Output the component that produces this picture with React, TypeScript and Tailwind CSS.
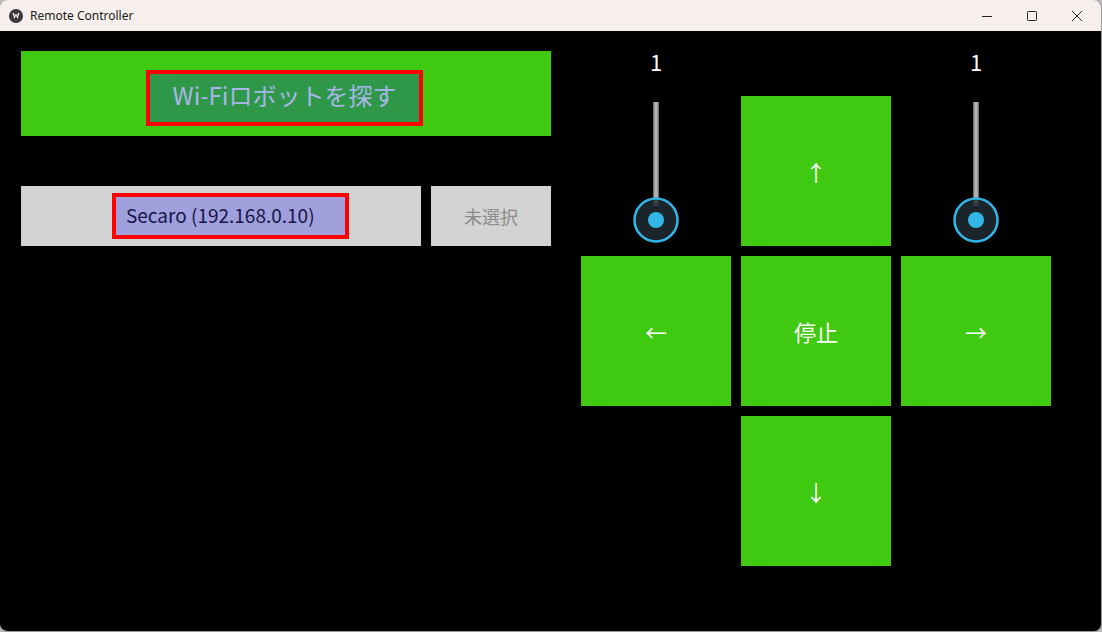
import React from 'react';

const jp = { fontFamily: '"Noto Sans CJK JP", "Noto Sans", sans-serif' };

// one green pad button
const Pad = ({ label, className = '' }: { label: string; className?: string }) => (
  <div className={`bg-[#3fc910] flex items-center justify-center text-white text-[22px] ${className}`} style={jp}>
    {label}
  </div>
);

const Slider = ({ className = '' }: { className?: string }) => (
  <div className={`flex flex-col items-center ${className}`}>
    <div className="h-[24px] leading-[20px] text-white text-[22px]" style={jp}>1</div>
    <svg width="150" height="146" className="mt-[25px]">
      <rect x="72.5" y="2" width="5" height="104" fill="#b4b4b4" />
      <rect x="72.5" y="2" width="1" height="104" fill="#8a8a8a" />
      <rect x="76.5" y="2" width="1" height="104" fill="#8a8a8a" />
      <circle cx="75" cy="120" r="21.5" fill="#1f2c33" fillOpacity="0.85" stroke="#33b5e5" strokeWidth="2.5" />
      <circle cx="75" cy="120" r="8" fill="#33b5e5" />
    </svg>
  </div>
);

const TitleBar = () => (
  <div className="h-[31px] bg-[#f6efec] flex items-center rounded-t-[8px]">
    <svg width="16" height="16" viewBox="0 0 16 16" className="ml-[8px]">
      <circle cx="8" cy="8" r="7" fill="#3b3b3b" />
      <path d="M4.5 5 L6.5 11 L8 7.5 L9.5 11 L11.5 5 L10 5 L9.3 8 L8 5.5 L6.7 8 L6 5 Z" fill="#ffffff" />
    </svg>
    <span className="ml-[6px] text-[12px] text-[#1b1b1b]" style={{ fontFamily: '"Noto Sans", "Open Sans", sans-serif' }}>
      Remote Controller
    </span>
    <div className="ml-auto flex h-full">
      <div className="w-[45px] flex items-center justify-center">
        <svg width="10" height="10"><line x1="0" y1="5.5" x2="10" y2="5.5" stroke="#222" strokeWidth="1" /></svg>
      </div>
      <div className="w-[45px] flex items-center justify-center">
        <svg width="10" height="10"><rect x="0.5" y="0.5" width="9" height="9" rx="1" fill="none" stroke="#222" strokeWidth="1" /></svg>
      </div>
      <div className="w-[45px] flex items-center justify-center mr-[2px]">
        <svg width="10" height="10"><path d="M0 0 L10 10 M10 0 L0 10" stroke="#222" strokeWidth="1" /></svg>
      </div>
    </div>
  </div>
);

const App = () => {
  return (
    <div className="w-[1102px] h-[632px] bg-[#b9b9b9] overflow-hidden">
      <div className="w-[1102px] h-[632px] rounded-[8px] overflow-hidden flex flex-col border-r border-b border-[#9a9a9a]">
        <TitleBar />
        <div className="flex-1 bg-black flex pt-[20px] pl-[21px]">
          {/* left column */}
          <div className="w-[530px] flex flex-col">
            <div className="h-[85px] bg-[#3fc910] flex pl-[125px] pt-[19px]">
              <div className="w-[277px] h-[56px] border-[4px] border-[#ff0000] bg-[#2e9848] flex items-center justify-center pb-[6px]">
                <span className="text-[24px] text-[#a9b6ea]" style={jp}>Wi-Fiロボットを探す</span>
              </div>
            </div>
            <div className="mt-[50px] h-[60px] flex gap-[10px]">
              <div className="w-[400px] bg-[#d3d3d3] pl-[91px] pt-[7px]">
                <div className="w-[237px] h-[46px] border-[4px] border-[#ff0000] bg-[#a0a0dc] flex items-center pl-[10px] pb-[1px]">
                  <span className="text-[19px] text-[#15154a]" style={jp}>Secaro (192.168.0.10)</span>
                </div>
              </div>
              <div className="w-[120px] bg-[#d3d3d3] flex items-center justify-center">
                <span className="text-[18px] text-[#8a8a8a]" style={jp}>未選択</span>
              </div>
            </div>
          </div>

          {/* right controller */}
          <div className="ml-[30px] grid grid-cols-[150px_150px_150px] grid-rows-[35px_150px_150px_150px] gap-[10px]">
            <Slider className="row-span-2 col-start-1 row-start-1" />
            <Pad label="↑" className="col-start-2 row-start-2" />
            <Slider className="row-span-2 col-start-3 row-start-1" />
            <Pad label="←" className="col-start-1 row-start-3" />
            <Pad label="停止" className="col-start-2 row-start-3" />
            <Pad label="→" className="col-start-3 row-start-3" />
            <Pad label="↓" className="col-start-2 row-start-4" />
          </div>
        </div>
      </div>
    </div>
  );
};

export default App;
